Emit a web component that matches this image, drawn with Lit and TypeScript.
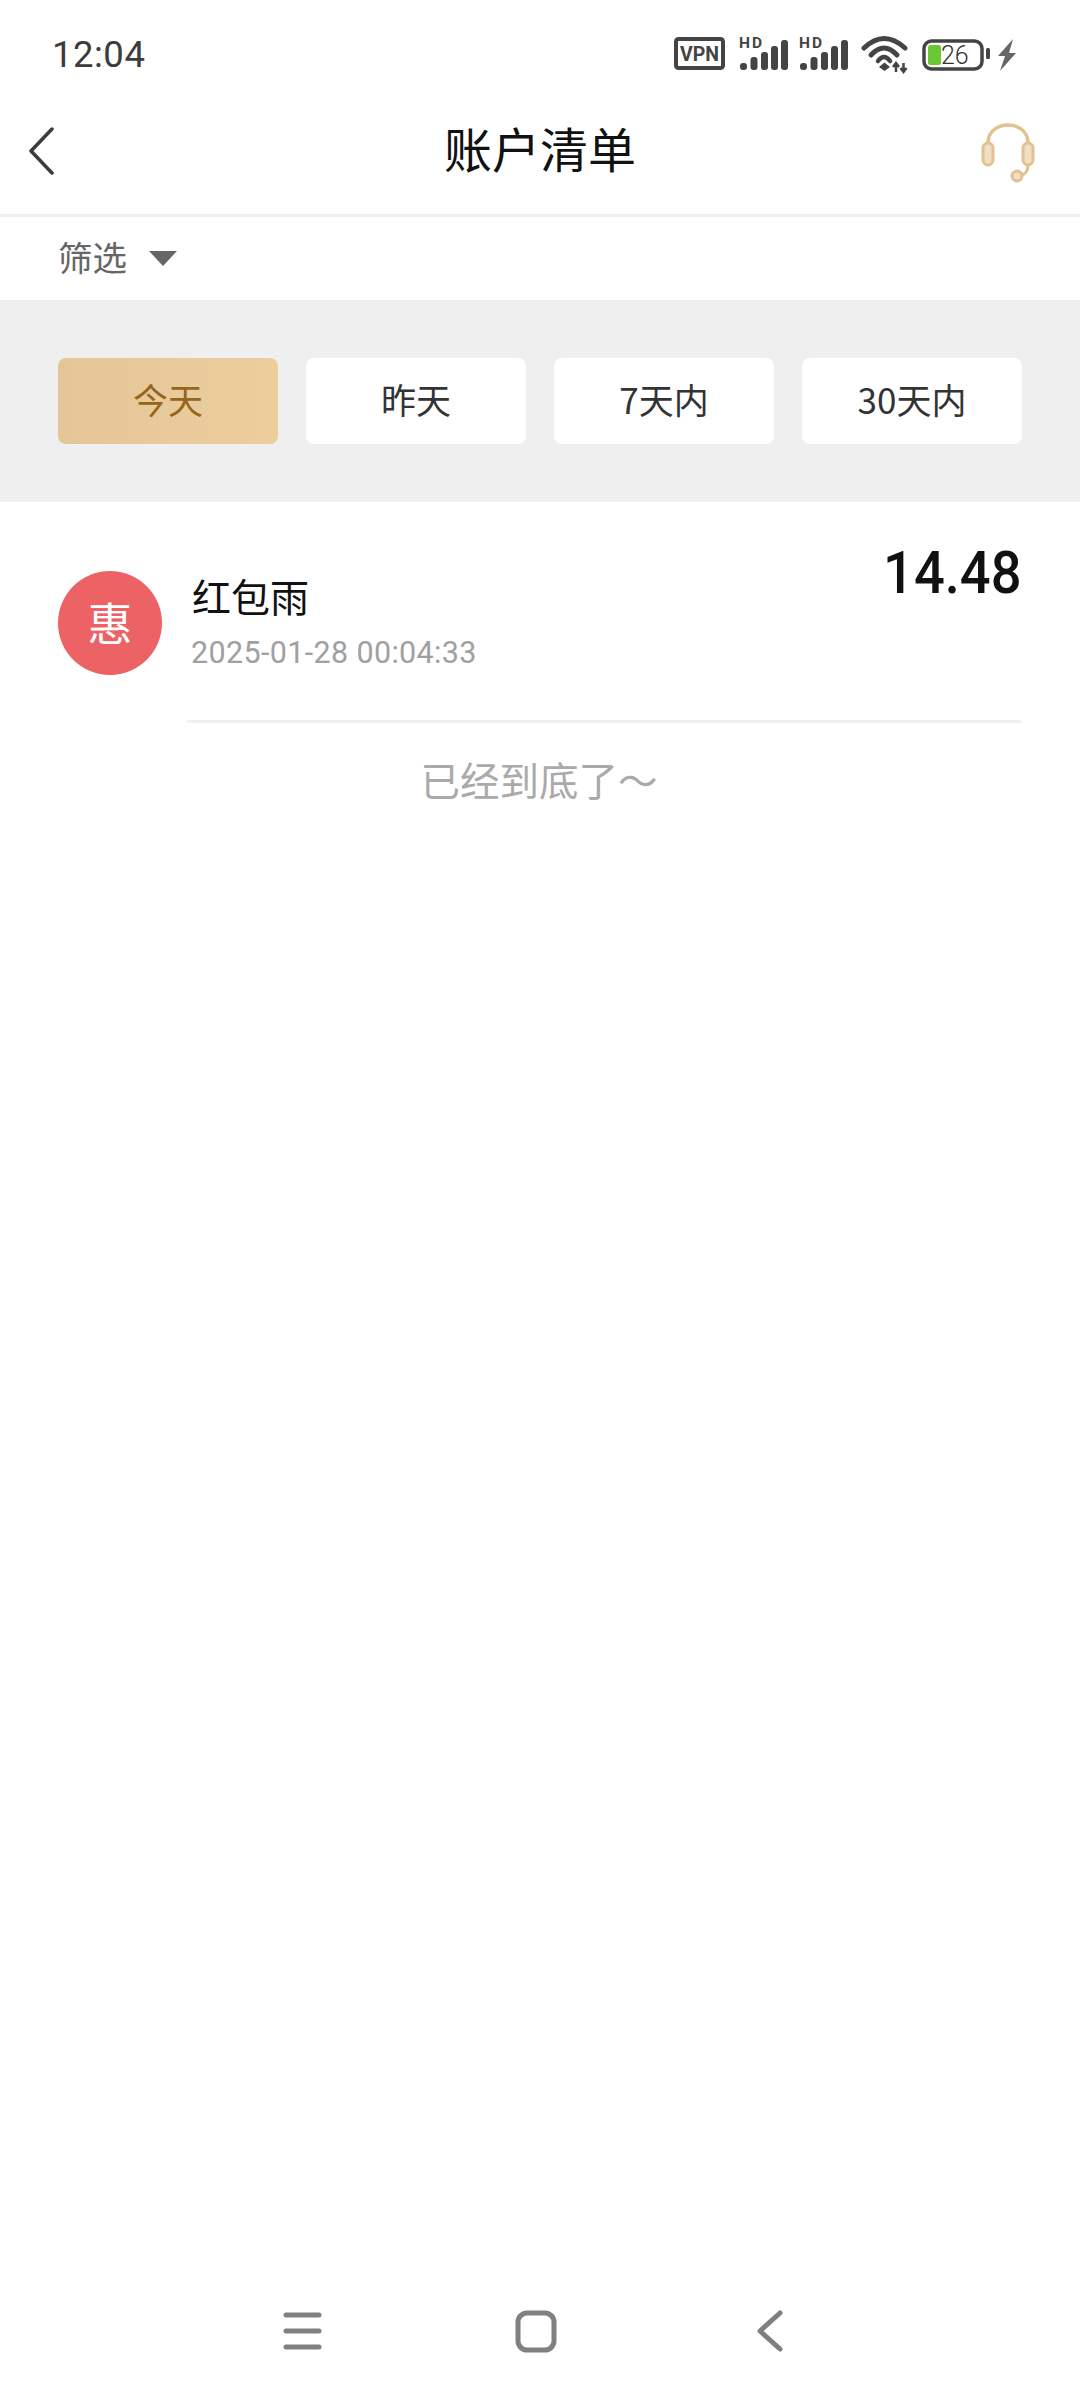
import { LitElement, html, css, svg } from "lit";
import { customElement } from "lit/decorators.js";

const statusIcons = svg`
<svg class="status-svg" width="344" height="46" viewBox="674 30 344 46" fill="none">
  <rect x="676" y="39" width="47" height="29" rx="2.5" stroke="#444" stroke-width="4"/>
  <text x="699.5" y="60.500" text-anchor="middle" font-family="Roboto, sans-serif" font-weight="700" font-size="19.500" fill="#444">VPN</text>
  ${[739, 799].map((x) => svg`
    <text x="${x}" y="48" font-family="Roboto, sans-serif" font-weight="700" font-size="15.500" fill="#444" textLength="23">HD</text>
    <rect x="${x + 1}" y="63" width="7" height="7" rx="3" fill="#444"/>
    <rect x="${x + 11.500}" y="57" width="7" height="13" rx="3" fill="#444"/>
    <rect x="${x + 22}" y="52" width="7" height="18" rx="3" fill="#444"/>
    <rect x="${x + 32}" y="46" width="7" height="24" rx="3" fill="#444"/>
    <rect x="${x + 42}" y="40" width="7" height="30" rx="3" fill="#444"/>
  `)}
  <path d="M864 48 Q884 29 905 48" stroke="#444" stroke-width="5" stroke-linecap="round"/>
  <path d="M871 55 Q884 41 897 55" stroke="#444" stroke-width="5" stroke-linecap="round"/>
  <path d="M878 61 Q884 53 890 61" stroke="#444" stroke-width="4.500" stroke-linecap="round"/>
  <path d="M879 67 L884.500 62.500 L890 67 L884.500 71 Z" fill="#444"/>
  <path d="M896 72 V65 M893 67 L896 63 L899 67 M903.500 63 V70 M900.500 68 L903.500 72 L906.500 68" stroke="#444" stroke-width="2.500"/>
  <rect x="924" y="41" width="58" height="28" rx="7.500" stroke="#444" stroke-width="3.500"/>
  <rect x="928" y="45" width="13" height="20" rx="2.500" fill="#6cc832"/>
  <text x="941" y="63.500" font-family="Roboto, sans-serif" font-weight="300" font-size="25" fill="#333">26</text>
  <rect x="986" y="48" width="4" height="11" rx="1.500" fill="#444"/>
  <path d="M1013 39 L998 56 H1005 L1000 71 L1016 53 H1009 Z" fill="#666"/>
</svg>`;

@customElement("app-root")
export class AppRoot extends LitElement {
  static styles = css`
    :host {
      display: flex;
      flex-direction: column;
      width: 1080px;
      height: 2400px;
      background: #fff;
      font-family: "Roboto", "Noto Sans CJK SC", sans-serif;
      overflow: hidden;
    }
    .cjk { font-family: "Noto Sans CJK SC", sans-serif; }
    .status {
      height: 88px;
      box-sizing: border-box;
      display: flex;
      justify-content: space-between;
      align-items: flex-start;
      padding: 31px 62px 0 52px;
    }
    .time { font-size: 36.500px; line-height: 48px; color: #3c3c3c; letter-spacing: 0.5px; }
    .status-svg { display: block; margin-top: -1px; }
    .header {
      height: 129px;
      box-sizing: border-box;
      display: grid;
      grid-template-columns: 1fr auto 1fr;
      align-items: center;
      padding: 0 24px;
      border-bottom: 3px solid #f0f0f0;
    }
    .header svg { display: block; }
    .title {
      font-size: 48px;
      color: #111;
      line-height: 64px;
      margin-top: -9px;
    }
    .hs { justify-self: end; margin-top: 4px; margin-right: 18px; }
    .filter {
      height: 83px;
      box-sizing: border-box;
      display: flex;
      align-items: center;
      gap: 22px;
      padding: 0 0 6px 58px;
      color: #666;
      font-size: 34.500px;
    }
    .tri { margin-top: 6px; }
    .band {
      height: 202px;
      background: #efefef;
      box-sizing: border-box;
      padding: 58px 58px;
      display: grid;
      grid-template-columns: repeat(4, 1fr);
      gap: 28px;
    }
    .tab {
      background: #fff;
      border-radius: 8px;
      display: flex;
      align-items: center;
      justify-content: center;
      font-size: 35px;
      color: #333;
      padding-bottom: 5px;
      box-sizing: border-box;
    }
    .tab.on {
      background: linear-gradient(90deg, #e4c697, #edcd9c);
      color: #94651c;
    }
    .row {
      margin-left: 58px;
      margin-right: 58px;
      height: 218px;
      box-sizing: border-box;
      display: flex;
      align-items: flex-start;
    }
    .avatar {
      width: 104px;
      height: 104px;
      margin-top: 69px;
      border-radius: 50%;
      background: #ed6264;
      color: #fff;
      font-size: 45px;
      display: flex;
      align-items: center;
      justify-content: center;
      flex: none;
      box-sizing: border-box;
      padding-bottom: 4px;
    }
    .info { margin-left: 29px; margin-top: 68px; flex: 1; }
    .name { font-size: 39px; line-height: 50px; color: #111; margin-left: 1px; }
    .date { font-size: 30.500px; line-height: 40px; color: #a0a0a0; margin-top: 13px; letter-spacing: 0.35px; }
    .amount {
      font-size: 59px;
      line-height: 70px;
      margin-top: 36px;
      color: #111;
      font-weight: 500;
      transform: scaleX(0.92);
      transform-origin: right center;
    }
    .divider { height: 3px; background: #f0f0f0; margin: 0 58px 0 187px; }
    .end {
      text-align: center;
      font-size: 39.500px;
      line-height: 50px;
      color: #aaa;
      margin-top: 31px;
      padding-right: 2px;
    }
    .spacer { flex: 1; }
    .nav {
      height: 97px;
      display: flex;
      align-items: flex-start;
      justify-content: center;
    }
    .nav svg { display: block; }
  `;

  render() {
    return html`
      <div class="status">
        <div class="time">12:04</div>
        ${statusIcons}
      </div>
      <div class="header">
        <svg width="30" height="50" viewBox="0 0 30 50" fill="none">
          <path d="M28 3 L7 25 L28 47" stroke="#3c3c3c" stroke-width="3.5" stroke-linecap="round" stroke-linejoin="round"/>
        </svg>
        <div class="title cjk">账户清单</div>
        <svg class="hs" width="60" height="66" viewBox="980 120 60 66" fill="none">
          <path d="M990 143 C990 119 1030 119 1030 143" stroke="#e3c08f" stroke-width="3.500" stroke-linecap="round"/>
          <rect x="985" y="143" width="10" height="22" rx="5" fill="#efdfc4" stroke="#e3c08f" stroke-width="3"/>
          <rect x="1025" y="143" width="10" height="22" rx="5" fill="#efdfc4" stroke="#e3c08f" stroke-width="3"/>
          <path d="M1030 165 C1030 171 1027 174 1024 175" stroke="#e3c08f" stroke-width="3"/>
          <circle cx="1019" cy="176" r="5" fill="#efdfc4" stroke="#e3c08f" stroke-width="3"/>
        </svg>
      </div>
      <div class="filter">
        <span class="cjk">筛选</span>
        <svg class="tri" width="28" height="15" viewBox="0 0 28 15"><path d="M0 0 H28 L14 15 Z" fill="#666"/></svg>
      </div>
      <div class="band">
        <div class="tab on cjk">今天</div>
        <div class="tab cjk">昨天</div>
        <div class="tab cjk">7天内</div>
        <div class="tab cjk">30天内</div>
      </div>
      <div class="row">
        <div class="avatar cjk">惠</div>
        <div class="info">
          <div class="name cjk">红包雨</div>
          <div class="date">2025-01-28 00:04:33</div>
        </div>
        <div class="amount">14.48</div>
      </div>
      <div class="divider"></div>
      <div class="end cjk">已经到底了～</div>
      <div class="spacer"></div>
      <div class="nav">
        <svg width="520" height="50" viewBox="280 2305 520 50" fill="none" stroke="#808080" stroke-linecap="round" stroke-linejoin="round">
          <path d="M286 2317 H319 M286 2333 H319 M286 2349 H319" stroke-width="5"/>
          <rect x="518" y="2315" width="36" height="37" rx="9" stroke-width="5"/>
          <path d="M780 2315 L760 2333 L780 2351" stroke-width="5"/>
        </svg>
      </div>
    `;
  }
}
